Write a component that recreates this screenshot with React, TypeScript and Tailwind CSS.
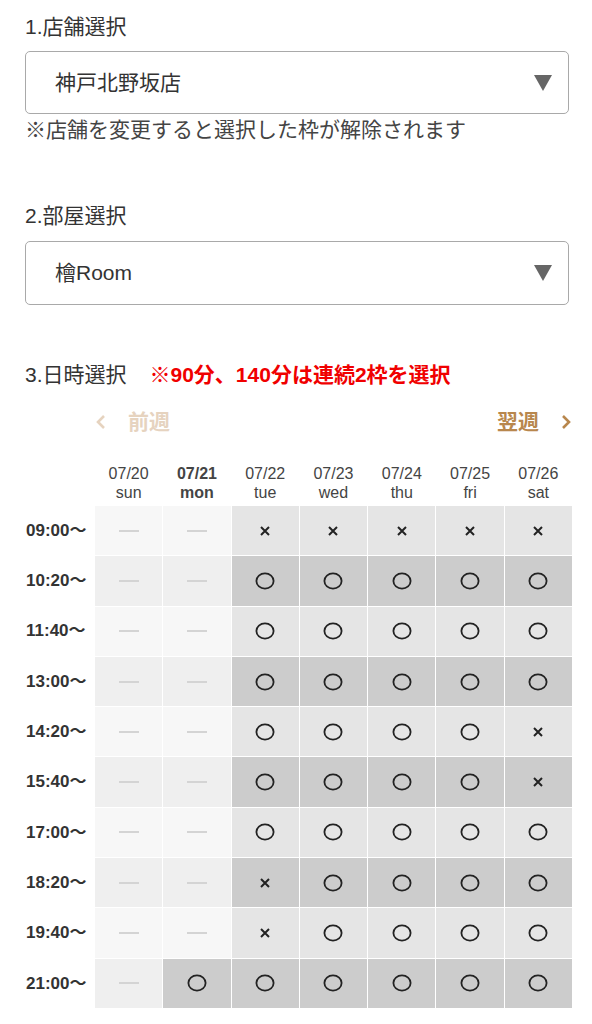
import React from "react"

type Cell = "past" | "ok" | "ng"

const days = [
  { date: "07/20", wd: "sun", bold: false },
  { date: "07/21", wd: "mon", bold: true },
  { date: "07/22", wd: "tue", bold: false },
  { date: "07/23", wd: "wed", bold: false },
  { date: "07/24", wd: "thu", bold: false },
  { date: "07/25", wd: "fri", bold: false },
  { date: "07/26", wd: "sat", bold: false },
]

const P: Cell = "past"
const O: Cell = "ok"
const X: Cell = "ng"

const rows: { time: string; cells: Cell[] }[] = [
  { time: "09:00〜", cells: [P, P, X, X, X, X, X] },
  { time: "10:20〜", cells: [P, P, O, O, O, O, O] },
  { time: "11:40〜", cells: [P, P, O, O, O, O, O] },
  { time: "13:00〜", cells: [P, P, O, O, O, O, O] },
  { time: "14:20〜", cells: [P, P, O, O, O, O, X] },
  { time: "15:40〜", cells: [P, P, O, O, O, O, X] },
  { time: "17:00〜", cells: [P, P, O, O, O, O, O] },
  { time: "18:20〜", cells: [P, P, X, O, O, O, O] },
  { time: "19:40〜", cells: [P, P, X, O, O, O, O] },
  { time: "21:00〜", cells: [P, O, O, O, O, O, O] },
]

function SelectBox({ value, className }: { value: string; className: string }) {
  return (
    <div
      className={`flex w-[544px] items-center justify-between rounded-[5px] border border-[#a9a9a9] bg-white pl-[29px] pr-[16px] ${className}`}
    >
      <span className="text-[21px] text-[#333]">{value}</span>
      <svg width="18" height="16" viewBox="0 0 18 16">
        <polygon points="0,0 18,0 9,16" fill="#666" />
      </svg>
    </div>
  )
}

function Mark({ cell }: { cell: Cell }) {
  if (cell === "past") return <div className="h-[2px] w-[20px] bg-[#d4d4d4]" />
  if (cell === "ng")
    return (
      <svg width="10" height="10" viewBox="0 0 10 10">
        <path d="M1 1 L9 9 M9 1 L1 9" stroke="#222" strokeWidth="2" />
      </svg>
    )
  return (
    <svg width="20" height="18" viewBox="0 0 20 18">
      <ellipse cx="10" cy="9" rx="8.6" ry="7.6" fill="none" stroke="#222" strokeWidth="1.8" />
    </svg>
  )
}

export default function App() {
  return (
    <div
      className="min-h-[1024px] w-[592px] bg-white pl-[25px] pt-[14px] text-[#333]"
      style={{ fontFamily: '"Liberation Sans", "Noto Sans CJK JP", sans-serif' }}
    >
      <div className="text-[21px] leading-[26px]">1.店舗選択</div>
      <SelectBox value="神戸北野坂店" className="mt-[11px] h-[63px]" />
      <div className="mt-[3px] text-[21px] leading-[26px] text-[#444]">※店舗を変更すると選択した枠が解除されます</div>

      <div className="mt-[60px] text-[21px] leading-[26px]">2.部屋選択</div>
      <SelectBox value="檜Room" className="mt-[12px] h-[64px]" />

      <div className="mt-[57px] flex items-center text-[21px] leading-[26px]">
        <span>3.日時選択</span>
        <span className="ml-[23px] font-bold text-[#f00000]">※90分、140分は連続2枠を選択</span>
      </div>

      <div className="mt-[21px] flex h-[26px] w-[547px] items-center justify-between pl-[70px] text-[21px] font-bold">
        <div className="flex items-center gap-[21px] text-[#e6d3bf]">
          <svg width="12" height="16" viewBox="0 0 12 16">
            <path d="M9 2 L3 8 L9 14" fill="none" stroke="#e6d3bf" strokeWidth="2.6" />
          </svg>
          <span>前週</span>
        </div>
        <div className="flex items-center gap-[21px] text-[#b8874d]">
          <span>翌週</span>
          <svg width="12" height="16" viewBox="0 0 12 16">
            <path d="M3 2 L9 8 L3 14" fill="none" stroke="#b8874d" strokeWidth="2.6" />
          </svg>
        </div>
      </div>

      <div className="mt-[29px] grid w-[547px] grid-cols-[69px_repeat(7,1fr)] gap-x-px">
        <div />
        {days.map((d) => (
          <div
            key={d.date}
            className={`flex flex-col items-center text-[16px] leading-[19px] text-[#444] ${d.bold ? "font-bold" : ""}`}
          >
            <span>{d.date}</span>
            <span>{d.wd}</span>
          </div>
        ))}
      </div>

      <div className="mt-[4px] grid w-[547px] grid-cols-[69px_repeat(7,1fr)] gap-px">
        {rows.map((r, ri) => {
          const odd = ri % 2 === 0
          return (
            <React.Fragment key={r.time}>
              <div className="flex h-[49.3px] items-center pl-px text-[17px] font-bold text-[#333]">{r.time}</div>
              {r.cells.map((c, ci) => {
                const bg =
                  c === "past"
                    ? odd
                      ? "bg-[#f7f7f7]"
                      : "bg-[#efefef]"
                    : odd
                      ? "bg-[#e5e5e5]"
                      : "bg-[#cccccc]"
                return (
                  <div key={ci} className={`flex h-[49.3px] items-center justify-center ${bg}`}>
                    <Mark cell={c} />
                  </div>
                )
              })}
            </React.Fragment>
          )
        })}
      </div>
    </div>
  )
}
